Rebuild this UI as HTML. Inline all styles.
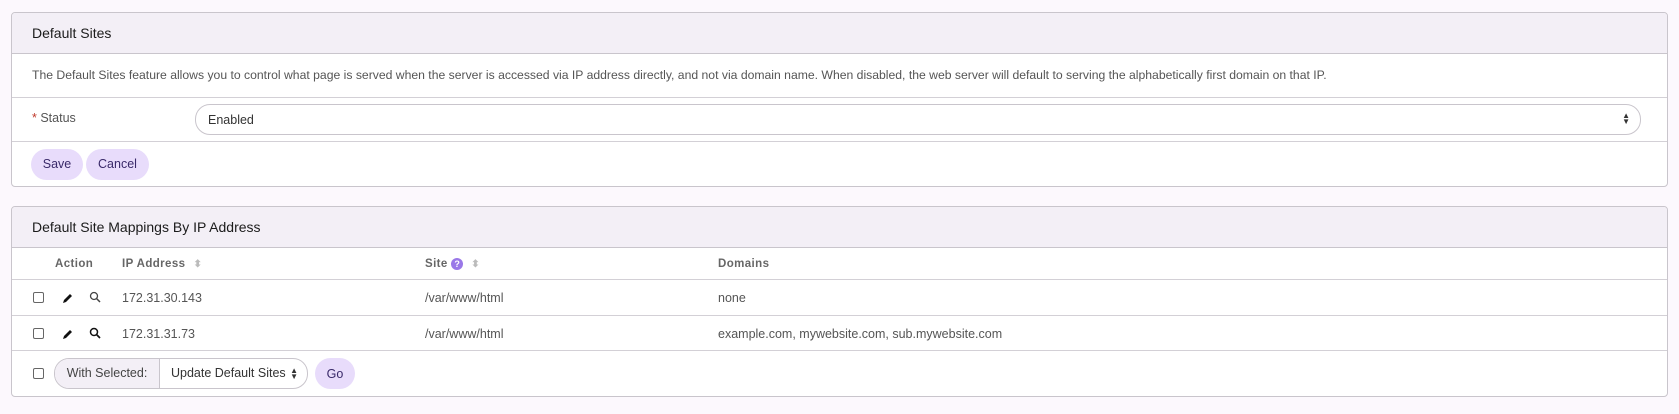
<!DOCTYPE html>
<html><head><style>
body{margin:0;background:#fcf8fd;font-family:"Liberation Sans",sans-serif;color:#333;width:1679px;height:414px;overflow:hidden}
.panel{position:absolute;left:11px;width:1655px;border:1px solid #c9c5cc;border-radius:4px;background:#fff;overflow:hidden}
.hd{background:#f3eff6;border-bottom:1px solid #c9c5cc;font-size:14px;color:#1b1b1b;padding-left:20px;box-sizing:border-box}
.row{border-bottom:1px solid #d3d0d6;position:relative;box-sizing:border-box}
.btn{display:inline-block;background:#e8dcfb;color:#3a2a6a;border-radius:16px;font-size:12.5px;height:31px;line-height:31px;text-align:center;position:absolute}
.cb{position:absolute;left:21px;width:9px;height:9px;border:1px solid #666;border-radius:2px;background:#fff}
.t{position:absolute;font-size:12.5px;color:#555}
.th{position:absolute;font-size:11.5px;color:#666;font-weight:bold;letter-spacing:.4px}
.sort{display:inline-block;margin-left:8px;color:#bbb;font-size:10px;vertical-align:0}
</style></head><body>
<div class="panel" style="top:12px;height:173px">
 <div class="hd" style="height:41px;line-height:40px">Default Sites</div>
 <div class="row" style="height:44px"><div class="t" style="left:20px;top:14px;font-size:12.2px">The Default Sites feature allows you to control what page is served when the server is accessed via IP address directly, and not via domain name. When disabled, the web server will default to serving the alphabetically first domain on that IP.</div></div>
 <div class="row" style="height:44px">
  <div class="t" style="left:20px;top:13px"><span style="color:#c0392b">*</span> Status</div>
  <div style="position:absolute;left:183px;top:6px;width:1444px;height:29px;border:1px solid #c9c5cc;border-radius:15px"><span class="t" style="left:12px;top:8px;color:#333">Enabled</span><span style="position:absolute;right:10px;top:8px;font-size:8px;color:#333;line-height:6px">▲<br>▼</span></div>
 </div>
 <div class="btn" style="left:19px;top:136px;width:52px">Save</div>
 <div class="btn" style="left:74px;top:136px;width:63px">Cancel</div>
</div>
<div class="panel" style="top:206px;height:189px">
 <div class="hd" style="height:41px;line-height:40px">Default Site Mappings By IP Address</div>
 <div class="row" style="height:32px">
  <div class="th" style="left:43px;top:10px">Action</div>
  <div class="th" style="left:110px;top:10px">IP Address<span class="sort">⬍</span></div>
  <div class="th" style="left:413px;top:10px">Site <span style="display:inline-block;width:12px;height:12px;border-radius:6px;background:#9a78e8;color:#fff;font-size:9px;text-align:center;line-height:12px">?</span><span class="sort">⬍</span></div>
  <div class="th" style="left:706px;top:10px">Domains</div>
 </div>
 <div class="row" style="height:36px">
  <div class="cb" style="top:12px"></div>
  <svg style="position:absolute;left:50px;top:12px" width="12" height="12" viewBox="0 0 12 12"><path d="M1 11l1-3 6-6 2 2-6 6z" fill="#111"/></svg>
  <svg style="position:absolute;left:77px;top:11px" width="12" height="12" viewBox="0 0 12 12"><circle cx="5" cy="5" r="3.5" fill="none" stroke="#444" stroke-width="1.3"/><path d="M7.5 7.5L11 11" stroke="#444" stroke-width="1.5"/></svg>
  <div class="t" style="left:110px;top:11px">172.31.30.143</div>
  <div class="t" style="left:413px;top:11px">/var/www/html</div>
  <div class="t" style="left:706px;top:11px">none</div>
 </div>
 <div class="row" style="height:35px">
  <div class="cb" style="top:12px"></div>
  <svg style="position:absolute;left:50px;top:12px" width="12" height="12" viewBox="0 0 12 12"><path d="M1 11l1-3 6-6 2 2-6 6z" fill="#111"/></svg>
  <svg style="position:absolute;left:77px;top:11px" width="12" height="12" viewBox="0 0 12 12"><circle cx="5" cy="5" r="3.5" fill="none" stroke="#111" stroke-width="1.5"/><path d="M7.5 7.5L11 11" stroke="#111" stroke-width="1.7"/></svg>
  <div class="t" style="left:110px;top:11px">172.31.31.73</div>
  <div class="t" style="left:413px;top:11px">/var/www/html</div>
  <div class="t" style="left:706px;top:11px">example.com, mywebsite.com, sub.mywebsite.com</div>
 </div>
 <div class="cb" style="top:161px"></div>
 <div style="position:absolute;left:42px;top:151px;width:252px;height:29px;border:1px solid #c9c5cc;border-radius:15px;overflow:hidden;font-size:12.5px">
  <div style="position:absolute;left:0;top:0;width:104px;height:29px;background:#f3eff6;border-right:1px solid #c9c5cc;line-height:29px;text-align:center;color:#444">With Selected:</div>
  <div style="position:absolute;left:116px;top:0;line-height:29px;color:#333">Update Default Sites</div>
  <span style="position:absolute;right:9px;top:9px;font-size:8px;line-height:6px">▲<br>▼</span>
 </div>
 <div class="btn" style="left:303px;top:151px;width:40px;line-height:33px">Go</div>
</div>
</body></html>
